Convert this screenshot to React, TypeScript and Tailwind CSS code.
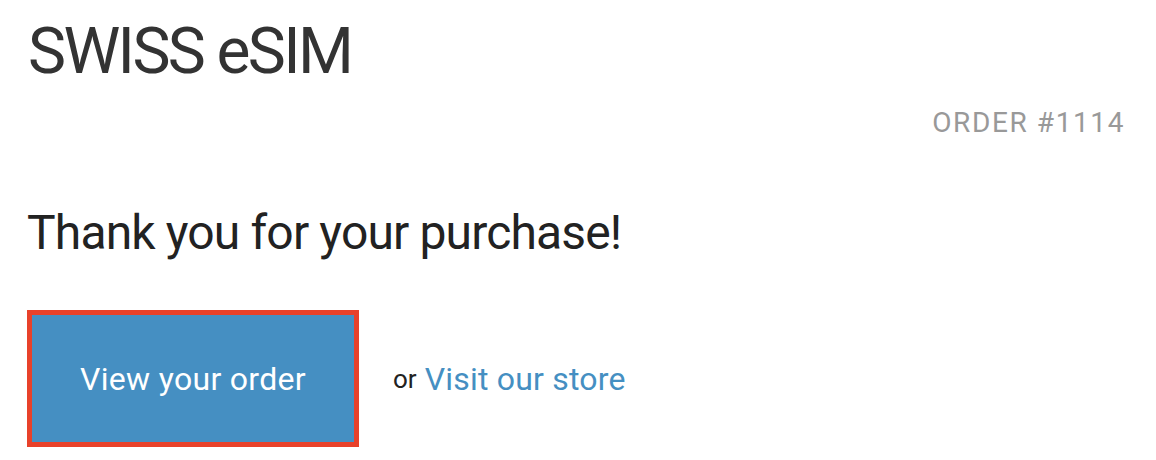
import React from "react";

const App: React.FC = () => {
    return (
        <div
            className="w-[1156px] h-[460px] bg-white overflow-hidden px-[30px]"
            style={{ fontFamily: "Roboto, 'Liberation Sans', sans-serif" }}
        >
            <h1 className="pt-[20px] -ml-[2px] text-[64px] leading-none text-[#333333] font-normal tracking-[-2.6px]">
                SWISS eSIM
            </h1>
            <div className="mt-[25px] mr-[1px] text-right text-[28px] leading-none text-[#999999] tracking-[1.6px]">
                ORDER #1114
            </div>
            <h2 className="mt-[72px] -ml-[3px] text-[48px] leading-none text-[#222222] font-normal tracking-[-0.85px]">
                Thank you for your purchase!
            </h2>
            <div className="mt-[53px] -ml-[3px] flex items-center">
                <a
                    href="#"
                    className="w-[332px] h-[137px] flex items-center justify-center bg-[#458fc2] border-[5px] border-[#e8412a] text-white text-[32px] leading-none tracking-[0.3px]"
                >
                    View your order
                </a>
                <span className="ml-[34px] text-[26px] leading-none text-[#222222]">
                    or
                </span>
                <a
                    href="#"
                    className="ml-[8px] text-[32px] leading-none text-[#458fc2] tracking-[0.2px]"
                >
                    Visit our store
                </a>
            </div>
        </div>
    );
};

export default App;
